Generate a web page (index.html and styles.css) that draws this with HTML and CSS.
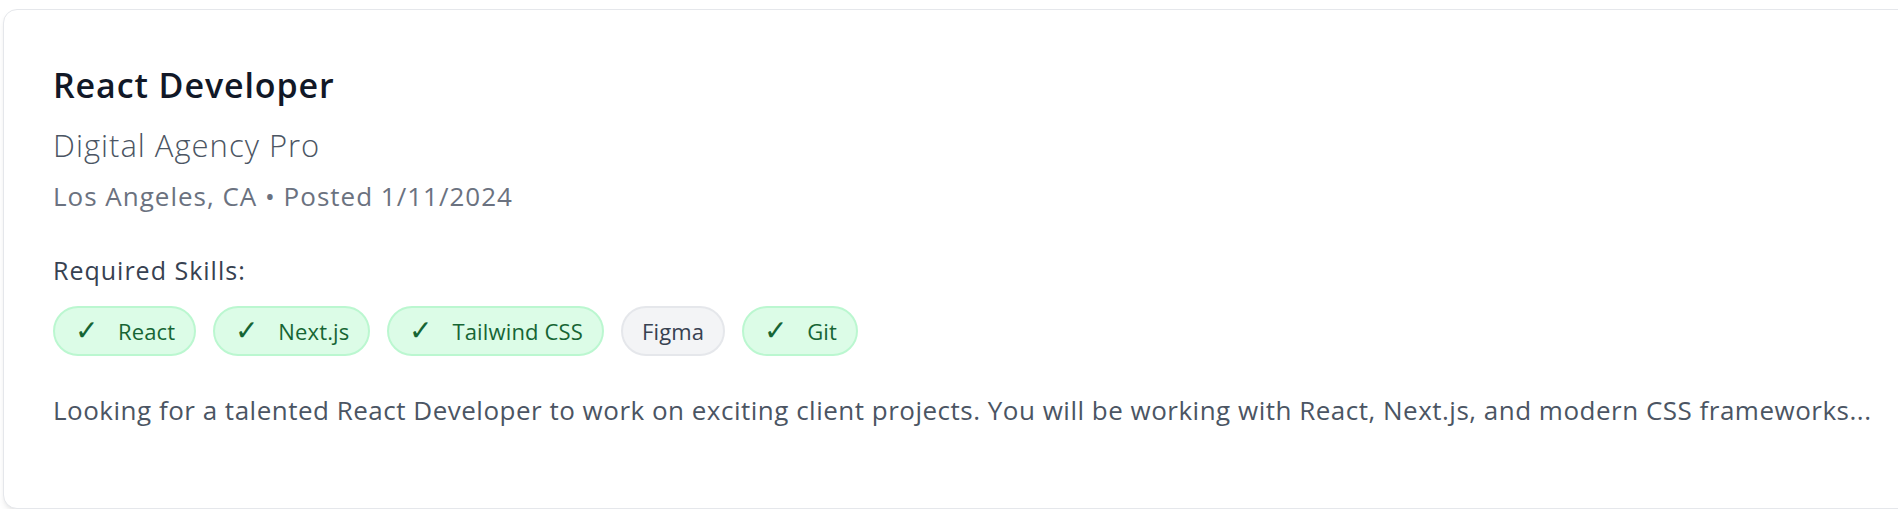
FILE: index.html
```html
<!DOCTYPE html>
<html lang="en">
<head>
<meta charset="utf-8">
<title>Job card</title>
<link rel="stylesheet" href="styles.css">
</head>
<body>
  <article class="job-card">
    <h2 class="job-title">React Developer</h2>
    <p class="job-company">Digital Agency Pro</p>
    <p class="job-meta">Los Angeles, CA • Posted 1/11/2024</p>
    <h3 class="skills-label">Required Skills:</h3>
    <ul class="skills">
      <li class="chip chip-match"><span class="chip-check">✓</span>React</li>
      <li class="chip chip-match"><span class="chip-check">✓</span>Next.js</li>
      <li class="chip chip-match"><span class="chip-check">✓</span>Tailwind CSS</li>
      <li class="chip chip-missing">Figma</li>
      <li class="chip chip-match"><span class="chip-check">✓</span>Git</li>
    </ul>
    <p class="job-desc">Looking for a talented React Developer to work on exciting client projects. You will be working with React, Next.js, and modern CSS frameworks...</p>
  </article>
</body>
</html>
```
FILE: styles.css
```css
html {
  overflow: hidden;
  background: #ffffff;
}
body {
  margin: 0;
  padding: 9px 0 0 3px;
  font-family: "Open Sans", "Noto Sans", sans-serif;
  color: #111827;
}
.job-card {
  box-sizing: border-box;
  width: 1940px;
  background: #ffffff;
  border: 1px solid #e5e7eb;
  border-radius: 14px;
  box-shadow: 0 4px 6px -1px rgba(0,0,0,0.08), 0 2px 4px -2px rgba(0,0,0,0.06);
  padding: 50px 49px 81px 49px;
}
.job-title {
  margin: 0;
  font-size: 34px;
  line-height: 50px;
  font-weight: 600;
  letter-spacing: 0.9px;
  color: #111827;
}
.job-company {
  margin: 15px 0 0;
  font-size: 31px;
  line-height: 40px;
  font-weight: 300;
  letter-spacing: 1px;
  color: #4b5563;
}
.job-meta {
  margin: 15px 0 0;
  font-size: 26px;
  line-height: 32px;
  font-weight: 400;
  letter-spacing: 1px;
  color: #6b7280;
}
.skills-label {
  margin: 42px 0 0;
  font-size: 25px;
  line-height: 32px;
  font-weight: 500;
  letter-spacing: 1px;
  color: #374151;
}
.skills {
  list-style: none;
  margin: 20px 0 0;
  padding: 0;
  display: flex;
  gap: 17px;
}
.chip {
  box-sizing: border-box;
  height: 50px;
  display: flex;
  align-items: center;
  padding: 0 19px;
  border-radius: 25px;
  border: 2px solid;
  font-size: 22px;
  letter-spacing: 0.15px;
}
.chip-match {
  background: #dcfce7;
  border-color: #bbf7d0;
  color: #166534;
}
.chip-missing {
  background: #f3f4f6;
  border-color: #e5e7eb;
  color: #374151;
}
.chip-check {
  display: inline-block;
  width: 22px;
  margin-left: 1px;
  margin-right: 21px;
  font-family: "DejaVu Sans", sans-serif;
  font-weight: 200;
  font-size: 28px;
  line-height: 1;
  letter-spacing: 0;
}
.job-desc {
  margin: 37px 0 0;
  font-size: 26px;
  line-height: 34px;
  font-weight: 400;
  letter-spacing: 0.5px;
  color: #4b5563;
}
```
